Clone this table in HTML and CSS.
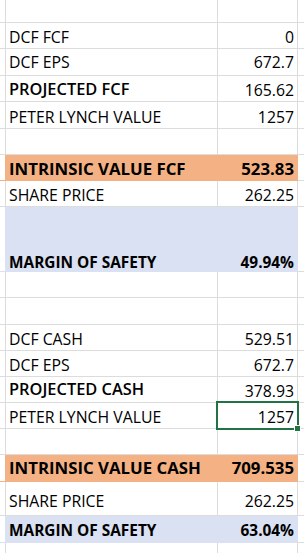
FILE: index.html
```html
<!DOCTYPE html>
<html>
<head>
<meta charset="utf-8">
<link rel="stylesheet" href="styles.css">
</head>
<body>
<div class="sheet">
  <div class="row h23"><div class="c0"></div><div class="ca"></div><div class="cb"></div><div class="cz"></div></div>
  <div class="row h26 g4"><div class="c0"></div><div class="ca">DCF FCF</div><div class="cb">0</div><div class="cz"></div></div>
  <div class="row h27 g6"><div class="c0"></div><div class="ca">DCF EPS</div><div class="cb">672.7</div><div class="cz"></div></div>
  <div class="row h26 g4"><div class="c0"></div><div class="ca semi g6">PROJECTED FCF</div><div class="cb">165.62</div><div class="cz"></div></div>
  <div class="row h27 g4"><div class="c0"></div><div class="ca">PETER LYNCH VALUE</div><div class="cb">1257</div><div class="cz"></div></div>
  <div class="row h26"><div class="c0"></div><div class="ca"></div><div class="cb"></div><div class="cz"></div></div>
  <div class="row h26 g4 orange"><div class="c0"></div><div class="ca big">INTRINSIC VALUE FCF</div><div class="cb big">523.83</div><div class="cz"></div></div>
  <div class="row h26 g4"><div class="c0"></div><div class="ca">SHARE PRICE</div><div class="cb">262.25</div><div class="cz"></div></div>
  <div class="row h65 g3 blue"><div class="c0"></div><div class="ca bold">MARGIN OF SAFETY</div><div class="cb bold">49.94%</div><div class="cz"></div></div>
  <div class="row h26"><div class="c0"></div><div class="ca"></div><div class="cb"></div><div class="cz"></div></div>
  <div class="row h27"><div class="c0"></div><div class="ca"></div><div class="cb"></div><div class="cz"></div></div>
  <div class="row h26 g4"><div class="c0"></div><div class="ca">DCF CASH</div><div class="cb">529.51</div><div class="cz"></div></div>
  <div class="row h26 g4"><div class="c0"></div><div class="ca">DCF EPS</div><div class="cb">672.7</div><div class="cz"></div></div>
  <div class="row h26 g4"><div class="c0"></div><div class="ca semi g7">PROJECTED CASH</div><div class="cb">378.93</div><div class="cz"></div></div>
  <div class="row h26 g4"><div class="c0"></div><div class="ca">PETER LYNCH VALUE</div><div class="cb selected">1257</div><div class="cz"></div></div>
  <div class="row h26"><div class="c0"></div><div class="ca"></div><div class="cb"></div><div class="cz"></div></div>
  <div class="row h27 g6 orange"><div class="c0"></div><div class="ca big">INTRINSIC VALUE CASH</div><div class="cb big">709.535</div><div class="cz"></div></div>
  <div class="row h34 g7"><div class="c0"></div><div class="ca">SHARE PRICE</div><div class="cb">262.25</div><div class="cz"></div></div>
  <div class="row h27 g6 blue"><div class="c0"></div><div class="ca bold">MARGIN OF SAFETY</div><div class="cb bold">63.04%</div><div class="cz"></div></div>
  <div class="row h26"><div class="c0"></div><div class="ca"></div><div class="cb"></div><div class="cz"></div></div>
</div>
</body>
</html>
```

FILE: styles.css
```css
html, body {
  margin: 0;
  padding: 0;
  background: #ffffff;
}
body {
  width: 304px;
  height: 553px;
  overflow: hidden;
  font-family: "Open Sans", "Liberation Sans", sans-serif;
  font-size: 15.8px;
  color: #000000;
}
.sheet {
  display: flex;
  flex-direction: column;
}
.row {
  display: grid;
  grid-template-columns: 6px 212px 80px 1fr;
  --gap: 4px;
}
.row > div {
  box-sizing: border-box;
  border-bottom: 1px solid #dcdcdc;
  display: flex;
  align-items: flex-end;
  line-height: 1;
  white-space: nowrap;
  padding-bottom: calc(var(--gap) - 2px);
}
.c0, .ca, .cb {
  border-right: 1px solid #dcdcdc;
}
.ca {
  padding-left: 3px;
}
.cb {
  justify-content: flex-end;
  padding-right: 3px;
}
.h23 { height: 23px; }
.h26 { height: 26px; }
.h27 { height: 27px; }
.h34 { height: 34px; }
.h65 { height: 65px; }
.g3 { --gap: 3px; }
.g4 { --gap: 4px; }
.g6 { --gap: 6px; }
.g7 { --gap: 7px; }
.row > .g6 { --gap: 6px; }
.row > .g7 { --gap: 7px; }
.semi {
  font-weight: 600;
  font-size: 16.4px;
}
.bold {
  font-weight: 700;
  font-size: 15.4px;
}
.big {
  font-weight: 700;
  font-size: 16.8px;
}
.orange > .c0, .orange > .ca, .orange > .cb {
  background: #f4b183;
  border-bottom-color: #f4b183;
  border-right-color: #f4b183;
}
.blue > .c0, .blue > .ca, .blue > .cb {
  background: #d9e1f2;
  border-bottom-color: #d9e1f2;
  border-right-color: #d9e1f2;
}
.orange > .c0, .blue > .c0 {
  background: #ffffff;
}
.selected {
  position: relative;
}
.selected::before {
  content: "";
  position: absolute;
  left: -2px;
  top: -2px;
  right: -2px;
  bottom: -2px;
  border: 2px solid #217346;
}
.selected::after {
  content: "";
  position: absolute;
  right: -4px;
  bottom: -4px;
  width: 5px;
  height: 5px;
  background: #217346;
  border: 1px solid #ffffff;
}
```
